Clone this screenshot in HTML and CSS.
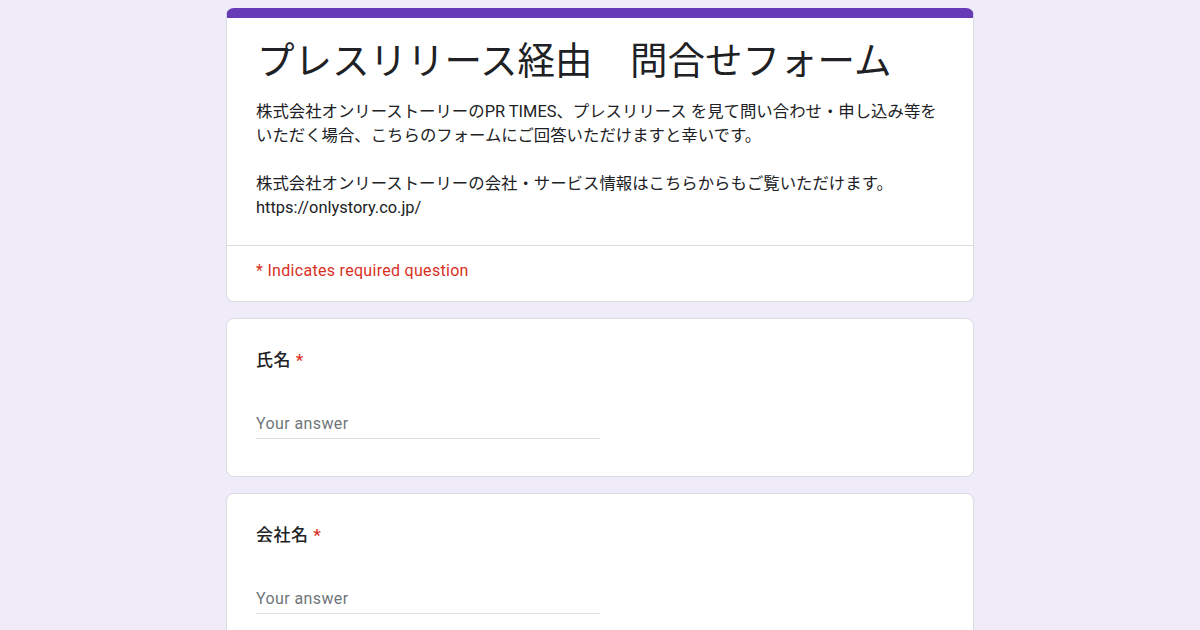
FILE: index.html
```html
<!DOCTYPE html>
<html lang="ja">
<head>
    <meta charset="UTF-8">
    <meta name="viewport" content="width=device-width, initial-scale=1.0">
    <title>プレスリリース経由　問合せフォーム</title>
    <link rel="stylesheet" href="styles.css">
</head>
<body>

    <div class="container">
        <!-- Form Header -->
        <div class="card form-head">
            <div class="head-body">
                <h1 class="form-title">プレスリリース経由　問合せフォーム</h1>
                <div class="form-desc">
                    <p>株式会社オンリーストーリーのPR TIMES、プレスリリース を見て問い合わせ・申し込み等をいただく場合、こちらのフォームにご回答いただけますと幸いです。</p>
                    <p>株式会社オンリーストーリーの会社・サービス情報はこちらからもご覧いただけます。<br>https://onlystory.co.jp/</p>
                </div>
            </div>
            <div class="required-note">* Indicates required question</div>
        </div>

        <!-- Questions -->
        <div class="card question">
            <label class="q-label" for="name">氏名 <span class="req">*</span></label>
            <input id="name" class="answer" type="text" placeholder="Your answer">
        </div>

        <div class="card question">
            <label class="q-label" for="company">会社名 <span class="req">*</span></label>
            <input id="company" class="answer" type="text" placeholder="Your answer">
        </div>
    </div>

</body>
</html>
```

FILE: styles.css
```css
/* General Styling */
body {
    font-family: Roboto, "Noto Sans CJK JP", sans-serif;
    background-color: #efebf8;
    margin: 0;
    padding: 8px 0 0;
    color: #202124;
}

.container {
    width: 748px;
    margin: 0 auto;
}

.card {
    background-color: #ffffff;
    border: 1px solid #dadce0;
    border-radius: 8px;
    margin-bottom: 16px;
}

/* Header Card */
.form-head {
    border-top: 10px solid #673ab7;
}

.head-body {
    padding: 16px 29px 25px;
    border-bottom: 1px solid #dadce0;
}

.form-title {
    font-family: "Noto Sans CJK JP", sans-serif;
    font-size: 37.5px;
    font-weight: 400;
    line-height: 48px;
    margin: 0 0 0 1px;
}

.form-desc {
    margin-top: 18px;
    font-size: 16.4px;
    line-height: 24px;
}

.form-desc p {
    margin: 0 0 24px;
}

.form-desc p:last-child {
    margin-bottom: 0;
}

.required-note {
    color: #d93025;
    font-size: 16px;
    letter-spacing: 0.3px;
    line-height: 24px;
    padding: 13px 29px 18px;
}

/* Question Cards */
.question {
    padding: 29px 29px 37px;
}

.q-label {
    display: block;
    font-size: 17px;
    letter-spacing: 0.5px;
    font-weight: 500;
    line-height: 24px;
}

.req {
    color: #d93025;
}

.answer {
    display: block;
    width: 50%;
    height: 30px;
    margin-top: 36px;
    padding: 0;
    border: none;
    border-bottom: 1px solid #e0e0e0;
    font-family: Roboto, sans-serif;
    font-size: 16px;
    letter-spacing: 0.4px;
    color: #202124;
    outline: none;
    background: transparent;
}

.answer::placeholder {
    color: #70757a;
}
```
